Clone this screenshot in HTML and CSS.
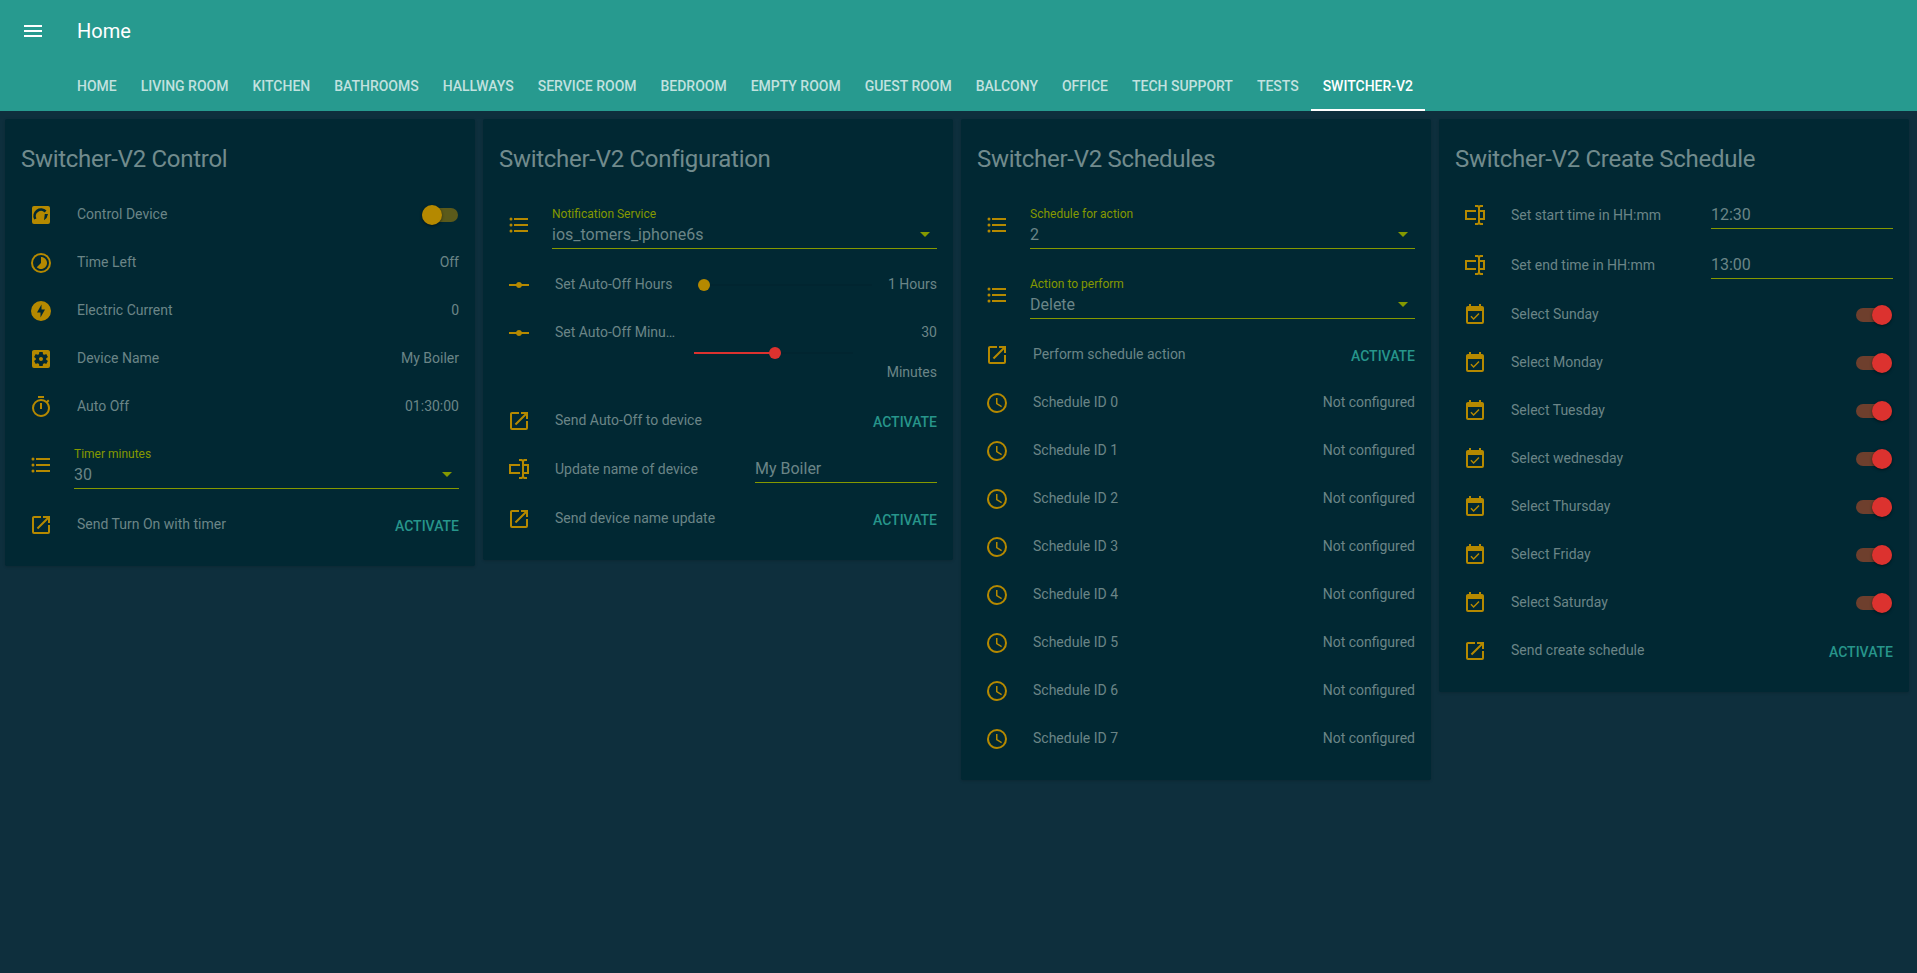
FILE: index.html
```html
<!DOCTYPE html>
<html lang="en">
<head>
    <meta charset="UTF-8">
    <meta name="viewport" content="width=device-width, initial-scale=1.0">
    <title>Home</title>
    <link rel="stylesheet" href="styles.css">
</head>
<body>

<svg class="icon-defs" aria-hidden="true">
    <defs>
        <path id="i-menu" d="M3 18h18v-2H3v2zm0-5h18v-2H3v2zm0-7v2h18V6H3z"/>
        <path id="i-control" fill-rule="evenodd" d="M5,3H19A2,2 0 0,1 21,5V19A2,2 0 0,1 19,21H5A2,2 0 0,1 3,19V5A2,2 0 0,1 5,3M5.2,16.6A7.7,7.7 0 0,1 17.5,7.6L15.7,9.4A5.2,5.2 0 0,0 7.4,15.4ZM15.8,11L19,11L17.6,15L15,17.2Z"/>
        <path id="i-timelapse" fill-rule="evenodd" d="M16.24,7.76C15.07,6.59 13.54,6 12,6V12L7.76,16.24C10.1,18.58 13.9,18.58 16.25,16.24C18.59,13.9 18.59,10.1 16.24,7.76M12,2A10,10 0 0,0 2,12A10,10 0 0,0 12,22A10,10 0 0,0 22,12A10,10 0 0,0 12,2M12,20A8,8 0 0,1 4,12A8,8 0 0,1 12,4A8,8 0 0,1 20,12A8,8 0 0,1 12,20Z"/>
        <path id="i-flash" fill-rule="evenodd" d="M12,2A10,10 0 0,0 2,12A10,10 0 0,0 12,22A10,10 0 0,0 22,12A10,10 0 0,0 12,2M12.5,5.5V10.5H16L11.5,18.5V13.5H8L12.5,5.5Z"/>
        <path id="i-settings" fill-rule="evenodd" d="M17.25,12C17.25,12.23 17.23,12.46 17.2,12.68L18.68,13.84C18.81,13.95 18.85,14.13 18.76,14.29L17.36,16.71C17.27,16.86 17.09,16.92 16.93,16.86L15.19,16.16C14.83,16.44 14.43,16.67 14,16.85L13.75,18.7C13.72,18.87 13.57,19 13.4,19H10.6C10.43,19 10.28,18.87 10.25,18.7L10,16.85C9.56,16.67 9.17,16.44 8.81,16.16L7.07,16.86C6.91,16.92 6.73,16.86 6.64,16.71L5.24,14.29C5.15,14.13 5.19,13.95 5.32,13.84L6.8,12.68C6.77,12.46 6.75,12.23 6.75,12C6.75,11.77 6.77,11.54 6.8,11.32L5.32,10.16C5.19,10.05 5.15,9.86 5.24,9.71L6.64,7.29C6.73,7.13 6.91,7.07 7.07,7.13L8.81,7.84C9.17,7.56 9.56,7.32 10,7.15L10.25,5.29C10.28,5.13 10.43,5 10.6,5H13.4C13.57,5 13.72,5.13 13.75,5.29L14,7.15C14.43,7.32 14.83,7.56 15.19,7.84L16.93,7.13C17.09,7.07 17.27,7.13 17.36,7.29L18.76,9.71C18.85,9.86 18.81,10.05 18.68,10.16L17.2,11.32C17.23,11.54 17.25,11.77 17.25,12M19,3H5C3.89,3 3,3.89 3,5V19A2,2 0 0,0 5,21H19A2,2 0 0,0 21,19V5C21,3.89 20.1,3 19,3M12,10C10.89,10 10,10.89 10,12A2,2 0 0,0 12,14A2,2 0 0,0 14,12C14,10.89 13.1,10 12,10Z"/>
        <path id="i-timer" d="M12,20A7,7 0 0,1 5,13A7,7 0 0,1 12,6A7,7 0 0,1 19,13A7,7 0 0,1 12,20M19.03,7.39L20.45,5.97C20,5.46 19.55,5 19.04,4.56L17.62,6C16.07,4.74 14.12,4 12,4A9,9 0 0,0 3,13A9,9 0 0,0 12,22C17,22 21,17.97 21,13C21,10.88 20.26,8.93 19.03,7.39M11,14H13V8H11M15,1H9V3H15V1Z"/>
        <path id="i-list" d="M7,5H21V7H7V5M7,13V11H21V13H7M4,4.5A1.5,1.5 0 0,1 5.5,6A1.5,1.5 0 0,1 4,7.5A1.5,1.5 0 0,1 2.5,6A1.5,1.5 0 0,1 4,4.5M4,10.5A1.5,1.5 0 0,1 5.5,12A1.5,1.5 0 0,1 4,13.5A1.5,1.5 0 0,1 2.5,12A1.5,1.5 0 0,1 4,10.5M7,19V17H21V19H7M4,16.5A1.5,1.5 0 0,1 5.5,18A1.5,1.5 0 0,1 4,19.5A1.5,1.5 0 0,1 2.5,18A1.5,1.5 0 0,1 4,16.5Z"/>
        <path id="i-open" d="M14,3V5H17.59L7.76,14.83L9.17,16.24L19,6.41V10H21V3M19,19H5V5H12V3H5C3.89,3 3,3.9 3,5V19A2,2 0 0,0 5,21H19A2,2 0 0,0 21,19V12H19V19Z"/>
        <path id="i-ray" d="M2,11H9.17C9.58,9.83 10.69,9 12,9C13.31,9 14.42,9.83 14.83,11H22V13H14.83C14.42,14.17 13.31,15 12,15C10.69,15 9.58,14.17 9.17,13H2V11Z"/>
        <path id="i-textbox" d="M17,7H22V17H17V19A1,1 0 0,0 18,20H20V22H17.5C16.95,22 16,21.55 16,21C16,21.55 15.05,22 14.5,22H12V20H14A1,1 0 0,0 15,19V5A1,1 0 0,0 14,4H12V2H14.5C15.05,2 16,2.45 16,3C16,2.45 16.95,2 17.5,2H20V4H18A1,1 0 0,0 17,5V7M2,7H13V9H4V15H13V17H2V7M20,15V9H17V15H20Z"/>
        <path id="i-calendar" d="M19,19H5V8H19M19,3H18V1H16V3H8V1H6V3H5C3.89,3 3,3.9 3,5V19A2,2 0 0,0 5,21H19A2,2 0 0,0 21,19V5C21,3.89 20.1,3 19,3M16.53,11.06L15.47,10L10.59,14.88L8.47,12.76L7.41,13.82L10.59,17L16.53,11.06Z"/>
        <path id="i-clock" d="M12,20A8,8 0 0,0 20,12A8,8 0 0,0 12,4A8,8 0 0,0 4,12A8,8 0 0,0 12,20M12,2A10,10 0 0,1 22,12A10,10 0 0,1 12,22C6.47,22 2,17.5 2,12A10,10 0 0,1 12,2M12.5,7V12.25L17,15L16.25,16.23L11,13V7H12.5Z"/>
    </defs>
</svg>

<header class="app-header">
    <div class="toolbar">
        <svg class="menu-icon" viewBox="0 0 24 24"><use href="#i-menu"/></svg>
        <div class="toolbar-title">Home</div>
    </div>
    <nav class="tabs">
        <a class="tab">Home</a>
        <a class="tab">Living Room</a>
        <a class="tab">Kitchen</a>
        <a class="tab">Bathrooms</a>
        <a class="tab">Hallways</a>
        <a class="tab">Service Room</a>
        <a class="tab">Bedroom</a>
        <a class="tab">Empty Room</a>
        <a class="tab">Guest Room</a>
        <a class="tab">Balcony</a>
        <a class="tab">Office</a>
        <a class="tab">Tech Support</a>
        <a class="tab">Tests</a>
        <a class="tab active">Switcher-V2</a>
    </nav>
</header>

<main class="cards">

    <section class="card">
        <h2 class="card-title">Switcher-V2 Control</h2>
        <div class="card-rows">
            <div class="row">
                <svg class="icon" viewBox="0 0 24 24"><use href="#i-control"/></svg>
                <div class="row-label">Control Device</div>
                <div class="toggle"><span class="toggle-track"></span><span class="toggle-thumb"></span></div>
            </div>
            <div class="row">
                <svg class="icon" viewBox="0 0 24 24"><use href="#i-timelapse"/></svg>
                <div class="row-label">Time Left</div>
                <div class="row-value">Off</div>
            </div>
            <div class="row">
                <svg class="icon" viewBox="0 0 24 24"><use href="#i-flash"/></svg>
                <div class="row-label">Electric Current</div>
                <div class="row-value">0</div>
            </div>
            <div class="row">
                <svg class="icon" viewBox="0 0 24 24"><use href="#i-settings"/></svg>
                <div class="row-label">Device Name</div>
                <div class="row-value">My Boiler</div>
            </div>
            <div class="row">
                <svg class="icon" viewBox="0 0 24 24"><use href="#i-timer"/></svg>
                <div class="row-label">Auto Off</div>
                <div class="row-value">01:30:00</div>
            </div>
            <div class="row select-row">
                <svg class="icon" viewBox="0 0 24 24"><use href="#i-list"/></svg>
                <div class="select">
                    <div class="select-label">Timer minutes</div>
                    <div class="select-value">30</div>
                    <span class="select-arrow"></span>
                </div>
            </div>
            <div class="row">
                <svg class="icon" viewBox="0 0 24 24"><use href="#i-open"/></svg>
                <div class="row-label">Send Turn On with timer</div>
                <div class="activate">Activate</div>
            </div>
        </div>
    </section>

    <section class="card">
        <h2 class="card-title">Switcher-V2 Configuration</h2>
        <div class="card-rows">
            <div class="row select-row">
                <svg class="icon" viewBox="0 0 24 24"><use href="#i-list"/></svg>
                <div class="select">
                    <div class="select-label">Notification Service</div>
                    <div class="select-value">ios_tomers_iphone6s</div>
                    <span class="select-arrow"></span>
                </div>
            </div>
            <div class="row">
                <svg class="icon" viewBox="0 0 24 24"><use href="#i-ray"/></svg>
                <div class="row-label slider-label">Set Auto-Off Hours</div>
                <div class="slider"><span class="slider-thumb idle"></span></div>
                <div class="row-value">1 Hours</div>
            </div>
            <div class="row slider-tall">
                <svg class="icon" viewBox="0 0 24 24"><use href="#i-ray"/></svg>
                <div class="row-label slider-label">Set Auto-Off Minutes</div>
                <div class="slider-stack">
                    <div class="row-value">30</div>
                    <div class="slider">
                        <span class="slider-fill"></span>
                        <span class="slider-thumb"></span>
                    </div>
                    <div class="row-value">Minutes</div>
                </div>
            </div>
            <div class="row">
                <svg class="icon" viewBox="0 0 24 24"><use href="#i-open"/></svg>
                <div class="row-label">Send Auto-Off to device</div>
                <div class="activate">Activate</div>
            </div>
            <div class="row input-row">
                <svg class="icon" viewBox="0 0 24 24"><use href="#i-textbox"/></svg>
                <div class="row-label">Update name of device</div>
                <div class="text-input">My Boiler</div>
            </div>
            <div class="row">
                <svg class="icon" viewBox="0 0 24 24"><use href="#i-open"/></svg>
                <div class="row-label">Send device name update</div>
                <div class="activate">Activate</div>
            </div>
        </div>
    </section>

    <section class="card">
        <h2 class="card-title">Switcher-V2 Schedules</h2>
        <div class="card-rows">
            <div class="row select-row">
                <svg class="icon" viewBox="0 0 24 24"><use href="#i-list"/></svg>
                <div class="select">
                    <div class="select-label">Schedule for action</div>
                    <div class="select-value">2</div>
                    <span class="select-arrow"></span>
                </div>
            </div>
            <div class="row select-row">
                <svg class="icon" viewBox="0 0 24 24"><use href="#i-list"/></svg>
                <div class="select">
                    <div class="select-label">Action to perform</div>
                    <div class="select-value">Delete</div>
                    <span class="select-arrow"></span>
                </div>
            </div>
            <div class="row">
                <svg class="icon" viewBox="0 0 24 24"><use href="#i-open"/></svg>
                <div class="row-label">Perform schedule action</div>
                <div class="activate">Activate</div>
            </div>
            <div class="row">
                <svg class="icon" viewBox="0 0 24 24"><use href="#i-clock"/></svg>
                <div class="row-label">Schedule ID 0</div>
                <div class="row-value">Not configured</div>
            </div>
            <div class="row">
                <svg class="icon" viewBox="0 0 24 24"><use href="#i-clock"/></svg>
                <div class="row-label">Schedule ID 1</div>
                <div class="row-value">Not configured</div>
            </div>
            <div class="row">
                <svg class="icon" viewBox="0 0 24 24"><use href="#i-clock"/></svg>
                <div class="row-label">Schedule ID 2</div>
                <div class="row-value">Not configured</div>
            </div>
            <div class="row">
                <svg class="icon" viewBox="0 0 24 24"><use href="#i-clock"/></svg>
                <div class="row-label">Schedule ID 3</div>
                <div class="row-value">Not configured</div>
            </div>
            <div class="row">
                <svg class="icon" viewBox="0 0 24 24"><use href="#i-clock"/></svg>
                <div class="row-label">Schedule ID 4</div>
                <div class="row-value">Not configured</div>
            </div>
            <div class="row">
                <svg class="icon" viewBox="0 0 24 24"><use href="#i-clock"/></svg>
                <div class="row-label">Schedule ID 5</div>
                <div class="row-value">Not configured</div>
            </div>
            <div class="row">
                <svg class="icon" viewBox="0 0 24 24"><use href="#i-clock"/></svg>
                <div class="row-label">Schedule ID 6</div>
                <div class="row-value">Not configured</div>
            </div>
            <div class="row">
                <svg class="icon" viewBox="0 0 24 24"><use href="#i-clock"/></svg>
                <div class="row-label">Schedule ID 7</div>
                <div class="row-value">Not configured</div>
            </div>
        </div>
    </section>

    <section class="card">
        <h2 class="card-title">Switcher-V2 Create Schedule</h2>
        <div class="card-rows">
            <div class="row input-row">
                <svg class="icon" viewBox="0 0 24 24"><use href="#i-textbox"/></svg>
                <div class="row-label">Set start time in HH:mm</div>
                <div class="text-input">12:30</div>
            </div>
            <div class="row input-row">
                <svg class="icon" viewBox="0 0 24 24"><use href="#i-textbox"/></svg>
                <div class="row-label">Set end time in HH:mm</div>
                <div class="text-input">13:00</div>
            </div>
            <div class="row">
                <svg class="icon" viewBox="0 0 24 24"><use href="#i-calendar"/></svg>
                <div class="row-label">Select Sunday</div>
                <div class="toggle on"><span class="toggle-track"></span><span class="toggle-thumb"></span></div>
            </div>
            <div class="row">
                <svg class="icon" viewBox="0 0 24 24"><use href="#i-calendar"/></svg>
                <div class="row-label">Select Monday</div>
                <div class="toggle on"><span class="toggle-track"></span><span class="toggle-thumb"></span></div>
            </div>
            <div class="row">
                <svg class="icon" viewBox="0 0 24 24"><use href="#i-calendar"/></svg>
                <div class="row-label">Select Tuesday</div>
                <div class="toggle on"><span class="toggle-track"></span><span class="toggle-thumb"></span></div>
            </div>
            <div class="row">
                <svg class="icon" viewBox="0 0 24 24"><use href="#i-calendar"/></svg>
                <div class="row-label">Select wednesday</div>
                <div class="toggle on"><span class="toggle-track"></span><span class="toggle-thumb"></span></div>
            </div>
            <div class="row">
                <svg class="icon" viewBox="0 0 24 24"><use href="#i-calendar"/></svg>
                <div class="row-label">Select Thursday</div>
                <div class="toggle on"><span class="toggle-track"></span><span class="toggle-thumb"></span></div>
            </div>
            <div class="row">
                <svg class="icon" viewBox="0 0 24 24"><use href="#i-calendar"/></svg>
                <div class="row-label">Select Friday</div>
                <div class="toggle on"><span class="toggle-track"></span><span class="toggle-thumb"></span></div>
            </div>
            <div class="row">
                <svg class="icon" viewBox="0 0 24 24"><use href="#i-calendar"/></svg>
                <div class="row-label">Select Saturday</div>
                <div class="toggle on"><span class="toggle-track"></span><span class="toggle-thumb"></span></div>
            </div>
            <div class="row">
                <svg class="icon" viewBox="0 0 24 24"><use href="#i-open"/></svg>
                <div class="row-label">Send create schedule</div>
                <div class="activate">Activate</div>
            </div>
        </div>
    </section>

</main>

</body>
</html>
```

FILE: styles.css
```css
* {
    box-sizing: border-box;
}
body {
    margin: 0;
    min-height: 973px;
    background-color: #0e2f3d;
    font-family: Roboto, "Noto Sans", sans-serif;
    font-size: 14px;
    color: #6b8587;
}
.icon-defs {
    display: none;
}

/* header */
.app-header {
    height: 111px;
    background-color: #279a8f;
    color: #fff;
}
.toolbar {
    display: flex;
    align-items: center;
    height: 62px;
    padding-left: 21px;
}
.menu-icon {
    width: 24px;
    height: 24px;
    fill: #fff;
    margin-right: 32px;
}
.toolbar-title {
    font-size: 20px;
}
.tabs {
    display: flex;
    height: 49px;
    padding-left: 65px;
}
.tab {
    display: flex;
    align-items: center;
    padding: 0 12px;
    border-bottom: 2px solid transparent;
    font-size: 14px;
    font-weight: 500;
    letter-spacing: -0.01px;
    text-transform: uppercase;
    color: rgba(255, 255, 255, 0.72);
}
.tab.active {
    color: #fff;
    border-bottom-color: #fff;
}

/* cards */
.cards {
    display: grid;
    grid-template-columns: repeat(4, 470px);
    gap: 8px;
    align-items: start;
    padding: 8px 0 0 5px;
}
.card {
    background-color: #012833;
    border-radius: 2px;
    padding: 0 16px 21px;
    box-shadow: 0 1px 3px rgba(0, 0, 0, 0.16);
}
.card-title {
    margin: 0;
    padding: 24px 0 20px;
    font-size: 24px;
    font-weight: 400;
    line-height: 32px;
    letter-spacing: -0.012em;
    color: #718b8d;
}
.card-rows {
    display: flex;
    flex-direction: column;
    gap: 8px;
}
.row {
    display: flex;
    align-items: center;
    height: 40px;
    padding-left: 8px;
}
.icon {
    flex: none;
    width: 24px;
    height: 24px;
    fill: #b58900;
    margin-right: 24px;
}
.row-label {
    flex: 1;
    min-width: 0;
    white-space: nowrap;
    overflow: hidden;
    text-overflow: ellipsis;
    margin-top: -2px;
}
.row-value {
    text-align: right;
    margin-top: -2px;
}
.activate {
    font-weight: 500;
    text-transform: uppercase;
    color: #27958b;
    margin-top: 2px;
}

/* dropdown */
.select-row {
    height: 62px;
}
.select-row .icon {
    margin-right: 21px;
    margin-bottom: 2px;
}
.select {
    position: relative;
    flex: 1;
    align-self: flex-start;
    height: 54px;
    border-bottom: 1px solid #859900;
}
.select-label {
    padding-top: 12px;
    font-size: 12px;
    line-height: 14px;
    color: #859900;
}
.select-value {
    margin-top: 2px;
    font-size: 16px;
    line-height: 24px;
}
.select-arrow {
    position: absolute;
    right: 7px;
    top: 37px;
    border: 5px solid transparent;
    border-top-color: #859900;
    border-bottom: 0;
}

/* text input */
.input-row {
    height: 42px;
    align-items: flex-start;
}
.input-row .icon {
    margin-top: 8px;
}
.input-row .row-label {
    margin-top: 0;
    line-height: 40px;
}
.text-input {
    flex: none;
    width: 182px;
    height: 34px;
    padding-top: 8px;
    font-size: 16px;
    line-height: 24px;
    border-bottom: 1px solid #859900;
}

/* toggle */
.toggle {
    position: relative;
    flex: none;
    width: 36px;
    height: 20px;
    margin-right: 1px;
}
.toggle-track {
    position: absolute;
    left: 0;
    top: 3px;
    width: 36px;
    height: 14px;
    border-radius: 7px;
    background-color: #5b5a1b;
}
.toggle-thumb {
    position: absolute;
    left: 0;
    top: 0;
    width: 20px;
    height: 20px;
    border-radius: 50%;
    background-color: #b58900;
    box-shadow: 0 1px 3px rgba(0, 0, 0, 0.5);
}
.toggle.on .toggle-track {
    background-color: #6e3f2d;
}
.toggle.on .toggle-thumb {
    left: 16px;
    background-color: #dc322f;
}

/* sliders */
.slider-label {
    flex: none;
    width: 124px;
}
.slider {
    position: relative;
    flex: none;
    height: 14px;
    background: linear-gradient(#012530, #012530) center / 100% 2px no-repeat;
}
.row > .slider {
    width: 174px;
    margin: 0 auto 0 19px;
}
.slider-thumb {
    position: absolute;
    left: 75px;
    top: 1px;
    width: 12px;
    height: 12px;
    border-radius: 50%;
    background-color: #dc322f;
}
.slider-thumb.idle {
    left: 0;
    background-color: #b58900;
}
.slider-fill {
    position: absolute;
    left: 0;
    top: 6px;
    width: 81px;
    height: 2px;
    background-color: #dc322f;
}
.slider-tall {
    height: 80px;
    align-items: flex-start;
}
.slider-tall .icon {
    margin-top: 8px;
}
.slider-tall .slider-label {
    margin-top: 11px;
}
.slider-stack {
    flex: 1;
    display: flex;
    flex-direction: column;
}
.slider-stack .row-value {
    line-height: 20px;
}
.slider-stack .row-value:first-child {
    margin-top: 9px;
}
.slider-stack .slider {
    width: 159px;
    margin: 4px 0 2px 15px;
}
.slider-stack .row-value:last-child {
    margin-top: 0;
}
```
